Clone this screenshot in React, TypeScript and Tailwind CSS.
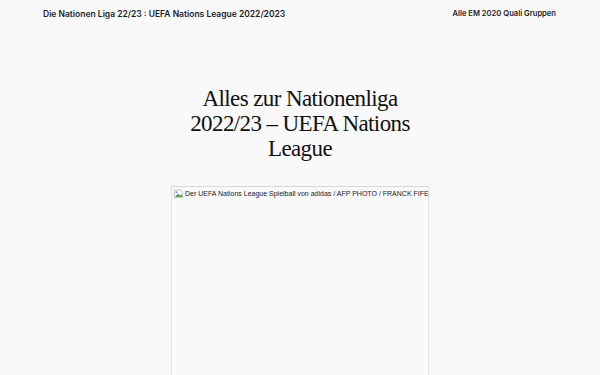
import React from 'react';

export default function App() {
  return (
    <div className="min-h-[375px] bg-[#f9f9f9] overflow-hidden h-[375px]">
      {/* Header */}
      <header className="flex justify-between items-center px-[43px] h-[28px] font-['Inter',sans-serif] font-semibold text-[#1e1e1e]">
        <span className="text-[8.5px]">Die Nationen Liga 22/23 : UEFA Nations League 2022/2023</span>
        <span className="text-[7.6px] pr-[1px]">Alle EM 2020 Quali Gruppen</span>
      </header>

      {/* Title */}
      <h1 className="mt-[58px] mx-auto w-[232px] text-center font-['Liberation_Serif',serif] text-[23px] leading-[25px] tracking-[-0.6px] text-[#111]">
        Alles zur Nationenliga 2022/23 – UEFA Nations League
      </h1>

      {/* Broken image */}
      <div className="mt-[25px] mx-auto w-[258px] h-[300px] border border-[#e2e2e2] border-t-[#d8d8d8]">
        <div className="flex items-start gap-[1px] pl-[1px] pt-[1px]">
          <svg width="11" height="11" viewBox="0 0 16 16" className="shrink-0">
            <path d="M2 3h9l3 3v8H2z" fill="#fff" stroke="#aaa" strokeWidth="1" />
            <path d="M3 13l4-5 3 3 2-2 2 4z" fill="#5a9e4a" />
            <circle cx="5" cy="6" r="1.3" fill="#4a90d9" />
          </svg>
          <span className="font-['Liberation_Sans',sans-serif] text-[7px] leading-[11px] text-[#222] whitespace-nowrap">
            Der UEFA Nations League Spielball von adidas / AFP PHOTO / FRANCK FIFE
          </span>
        </div>
      </div>
    </div>
  );
}
